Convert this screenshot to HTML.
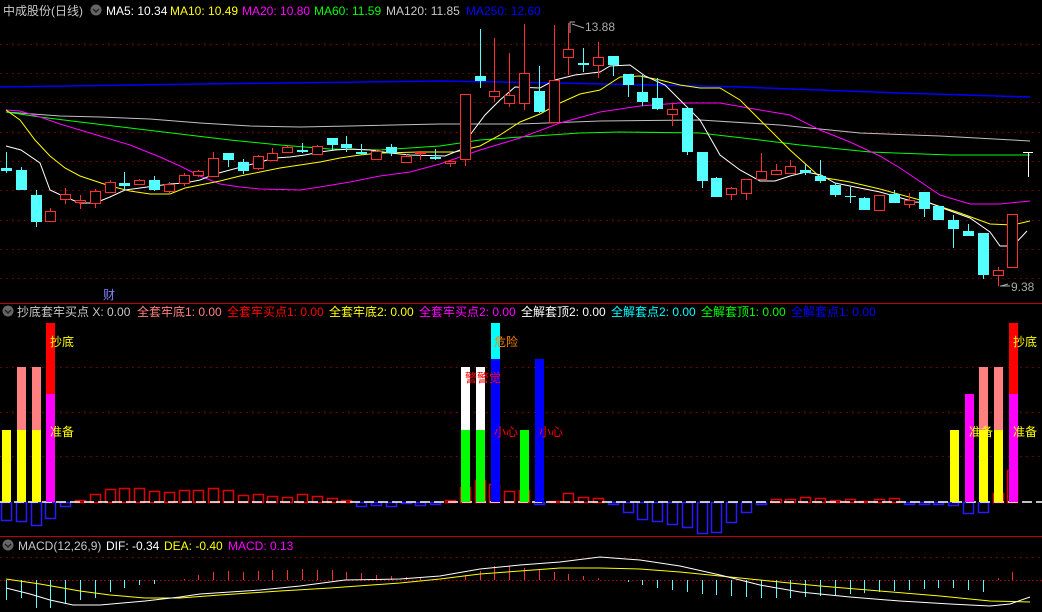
<!DOCTYPE html>
<html><head><meta charset="utf-8"><style>
html,body{margin:0;padding:0;background:#000;width:1042px;height:612px;overflow:hidden}
svg{display:block}
text{font-family:"Liberation Sans","Noto Sans CJK SC",sans-serif;font-size:12px}
</style></head><body>
<svg id="s" width="1042" height="612" xmlns="http://www.w3.org/2000/svg">
<rect width="1042" height="612" fill="#000"/>
<g id="grid"></g>
<g id="lines"></g>
<g id="candles"></g>
<g id="p2"></g>
<g id="p3"></g>
<line x1="0" y1="303.5" x2="1042" y2="303.5" stroke="#c00000"/>
<line x1="0" y1="536.5" x2="1042" y2="536.5" stroke="#c00000"/>
<circle cx="96" cy="10" r="5.5" fill="#666"/><path d="M93 9 L96 12 L99 9" stroke="#222" stroke-width="1.5" fill="none"/>
<text x="3" y="15" fill="#c8c8c8">中成股份(日线)</text>
<text x="106" y="15" fill="#fff">MA5: 10.34</text>
<text x="170" y="15" fill="#ffff00">MA10: 10.49</text>
<text x="242" y="15" fill="#ff00ff">MA20: 10.80</text>
<text x="314" y="15" fill="#00ff00">MA60: 11.59</text>
<text x="386" y="15" fill="#c8c8c8">MA120: 11.85</text>
<text x="466" y="15" fill="#0000ff">MA250: 12.60</text>
<circle cx="8" cy="311" r="5.5" fill="#666"/><path d="M5 310 L8 313 L11 310" stroke="#222" stroke-width="1.5" fill="none"/>
<text x="17" y="316" fill="#c8c8c8">抄底套牢买点 X: 0.00</text>
<text x="137" y="316" fill="#ff8080">全套牢底1: 0.00</text>
<text x="227" y="316" fill="#ff0000">全套牢买点1: 0.00</text>
<text x="329" y="316" fill="#ffff00">全套牢底2: 0.00</text>
<text x="419" y="316" fill="#ff00ff">全套牢买点2: 0.00</text>
<text x="521" y="316" fill="#fff">全解套顶2: 0.00</text>
<text x="611" y="316" fill="#00ffff">全解套点2: 0.00</text>
<text x="701" y="316" fill="#00ff00">全解套顶1: 0.00</text>
<text x="791" y="316" fill="#0000ff">全解套点1: 0.00</text>
<circle cx="8" cy="545" r="5.5" fill="#666"/><path d="M5 544 L8 547 L11 544" stroke="#222" stroke-width="1.5" fill="none"/>
<text x="18" y="550" fill="#c8c8c8">MACD(12,26,9)</text>
<text x="106" y="550" fill="#fff">DIF: -0.34</text>
<text x="164" y="550" fill="#ffff00">DEA: -0.40</text>
<text x="228" y="550" fill="#ff00ff">MACD: 0.13</text>
<text x="103" y="299" fill="#8080ff">财</text>
<path d="M570 33 V22 H575 M572 24 L584 28" stroke="#aaa" fill="none"/>
<text x="585" y="31" fill="#aaa">13.88</text>
<path d="M1001 286 L1008 284 M1000 286 H1010" stroke="#aaa" fill="none"/>
<text x="1011" y="291" fill="#aaa">9.38</text>
<path d="M1023 152.5 H1033 M1028.5 152 V177" stroke="#fff"/>
</svg>
<script>
var NS="http://www.w3.org/2000/svg";
function el(p,t,a){var e=document.createElementNS(NS,t);for(var k in a)e.setAttribute(k,a[k]);document.getElementById(p).appendChild(e);return e;}
function tx(x,y,s,c){var e=el('p2','text',{x:x,y:y,fill:c,'font-size':13});e.textContent=s;}
// grids
[44,73,102,132,161,190,220,249,278,367,412,456,557].forEach(function(y){el('grid','line',{x1:0,x2:1042,y1:y+.5,y2:y+.5,stroke:'#8a0000','stroke-dasharray':'1.5 4.5'});});
el('grid','line',{x1:0,x2:1042,y1:580.5,y2:580.5,stroke:'#c00000','stroke-dasharray':'1.5 2.5'});
// candles: [type c/r, top, bottom, wickTop, wickBot, filled]
var C=[['c',168,171,152,173],['c',170,190,167,190],['c',195,222,190,227],['r',211,221,208,221],['r',194,199,188,204],['r',200,202,195,209],['r',191,203,189,208],['r',182,192,180,193],['c',183,186,172,190],['r',180,184,179,185],['c',180,190,176,191],['r',184,191,182,193],['r',175,183,173,186],['r',171,175,170,177],['r',158,176,152,176],['c',153,160,153,167],['c',162,171,159,174],['r',156,168,155,170],['r',153,160,148,161],['r',147,152,146,153],['c',150,152,143,153],['r',146,154,145,155],['c',138,145,138,150],['c',144,148,136,152],['c',152,154,144,155],['r',151,159,150,160],['c',147,153,144,156],['r',156,162,154,163],['r',152,154,151,160,1],['c',157,159,149,160],['r',161,163,160,167],['r',94,159,94,166],['c',76,81,29,88],['r',91,96,38,102],['r',95,103,53,107],['r',73,103,24,110],['c',91,112,66,113],['r',80,122,25,122],['r',49,57,23,75],['c',63,65,48,72],['r',57,65,42,78],['c',56,65,56,76],['c',74,85,74,97],['c',92,102,75,106],['c',98,109,78,110],['r',109,114,104,126],['c',108,152,108,155],['c',152,181,152,188],['c',178,197,177,197],['r',188,194,187,200],['r',179,193,179,200],['r',171,179,153,180],['r',170,174,164,174],['r',166,173,160,173],['c',170,173,164,175],['c',176,181,160,183],['c',185,195,183,197],['c',196,196,187,203],['c',198,210,197,210],['r',195,210,195,210],['c',194,203,190,203],['r',200,204,193,208],['c',192,209,192,217],['c',206,220,206,220],['c',220,229,215,248],['c',231,236,224,236],['c',233,275,233,279],['r',270,275,267,286],['r',214,267,214,267]];
C.forEach(function(d,i){var x=Math.round(6+i*14.8);var col=d[0]=='c'?'#54ffff':'#ff3030';
 el('candles','line',{x1:x+.5,x2:x+.5,y1:d[3],y2:d[4],stroke:col});
 var h=Math.max(1,d[2]-d[1]);
 if(d[0]=='c'||d[5]) el('candles','rect',{x:x-5,y:d[1],width:11,height:h,fill:col});
 else el('candles','rect',{x:x-4.5,y:d[1]+.5,width:10,height:h,fill:'#000',stroke:col});
});
function pl(g,pts,c,w){el(g,'polyline',{points:pts.map(function(p){return p.join(',')}).join(' '),fill:'none',stroke:c,'stroke-width':w||1});}
pl('lines',[[0,87],[200,84],[440,81],[560,83],[740,87],[900,93],[1030,97]],'#0000ff',1.5);
pl('lines',[[6,112],[60,116],[100,117],[150,119],[200,123],[250,126],[300,127],[350,126],[440,124],[520,124],[600,121],[700,120],[780,125],[860,133],[940,136],[1030,141]],'#c0c0c0');
pl('lines',[[6,112],[40,117],[80,122],[130,128],[180,134],[230,140],[280,145],[330,149],[380,150],[440,146],[480,140],[520,137],[580,133],[620,132],[700,133],[760,140],[800,145],[870,152],[950,155],[1030,155]],'#00ff00');
pl('lines',[[6,110],[20,111],[40,117],[60,124],[80,130],[100,136],[130,145],[160,157],[180,166],[200,176],[220,184],[240,187],[260,189],[300,190],[320,187],[350,182],[380,176],[410,172],[440,164],[480,150],[520,138],[560,123],[600,112],[640,106],[680,103],[720,103],[760,110],[790,115],[820,130],[850,142],[880,156],[900,168],[940,195],[970,204],[1000,204],[1030,201]],'#ff00ff');
pl('lines',[[6,110],[20,120],[35,140],[50,156],[65,168],[80,176],[95,181],[110,186],[130,191],[150,194],[170,194],[185,188],[200,185],[220,181],[240,176],[260,172],[280,168],[300,165],[320,162],[340,158],[360,155],[380,153],[420,152],[455,152],[480,146],[500,135],[520,122],[540,114],[560,103],[580,94],[600,90],[620,77],[640,76],[660,80],[680,85],[700,88],[720,88],[740,100],[760,120],[790,150],[820,177],[850,182],[880,189],[920,200],[960,213],[990,224],[1013,225],[1030,221]],'#ffff00');
pl('lines',[[6,146],[21,150],[40,163],[50,190],[65,197],[80,203],[95,203],[110,197],[125,190],[140,188],[155,186],[170,184],[185,183],[200,180],[215,174],[230,170],[245,166],[260,162],[275,158],[290,157],[305,155],[320,152],[335,150],[350,149],[370,150],[390,153],[410,155],[445,156],[460,150],[470,135],[485,115],[500,100],[515,87],[540,88],[555,80],[575,75],[600,72],[610,66],[630,65],[645,76],[665,85],[680,100],[700,120],[720,155],[740,170],[760,181],[775,181],[790,176],[806,172],[821,175],[835,183],[850,186],[880,192],[915,202],[930,203],[945,209],[970,218],[990,232],[1000,246],[1013,246],[1027,231]],'#ffffff');
// panel 2 histogram (outline bars), values: top y if <502 red, bottom if >502 blue
var H=[520,521,525,518,506,500,494,489,488,488,491,492,490,490,488,490,495,494,496,497,494,496,498,500,506,505,506,503,505,504,500,487,480,484,491,490,504,501,493,497,498,504,512,519,521,524,527,533,532,522,512,504,499,499,497,498,500,499,501,499,498,504,504,504,505,513,512,493,470];
H.forEach(function(v,i){var x=Math.round(6+i*14.8);
 if(v>502) el('p2','rect',{x:x-4.5,y:502.5,width:10,height:v-502,fill:'none',stroke:'#2a1aff','stroke-width':1.5});
 else if(v<502) el('p2','rect',{x:x-4.5,y:v+.5,width:10,height:502-v,fill:'none',stroke:'#e00000','stroke-width':1.5});
});
el('p2','line',{x1:0,x2:1042,y1:502,y2:502,stroke:'#fff','stroke-width':1.5,'stroke-dasharray':'10 4'});
function bar(x,segs){segs.forEach(function(s){el('p2','rect',{x:x,y:s[0],width:9,height:s[1]-s[0],fill:s[2]});});}
bar(2,[[430,502,'#ffff00']]);
bar(17,[[367,430,'#ff8080'],[430,502,'#ffff00']]);
bar(32,[[367,430,'#ff8080'],[430,502,'#ffff00']]);
bar(46,[[323,394,'#ff0000'],[394,502,'#ff00ff']]);
bar(461,[[367,430,'#ffffff'],[430,502,'#00ff00']]);
bar(476,[[367,430,'#ffffff'],[430,502,'#00ff00']]);
bar(491,[[323,359,'#00ffff'],[359,502,'#0000ff']]);
bar(520,[[430,502,'#00ff00']]);
bar(535,[[359,502,'#0000ff']]);
bar(950,[[430,502,'#ffff00']]);
bar(965,[[394,502,'#ff00ff']]);
bar(979,[[367,430,'#ff8080'],[430,502,'#ffff00']]);
bar(994,[[367,430,'#ff8080'],[430,502,'#ffff00']]);
bar(1009,[[323,394,'#ff0000'],[394,502,'#ff00ff']]);
tx(50,346,'抄底','#ffff00');tx(50,436,'准备','#ffff00');
tx(494,346,'危险','#ff8000');tx(465,382,'警警觉','#ff0000');
tx(494,436,'小心','#ff0000');tx(539,436,'小心','#ff0000');
tx(969,436,'准备','#ffff00');tx(1013,436,'准备','#ffff00');tx(1013,346,'抄底','#ffff00');
// MACD
var M=[600,598,608,608,604,600,598,592,588,585,584,580,579,575,572,571,572,571,570,570,569,570,570,572,573,575,576,577,577,579,580,575,571,566,566,568,570,572,574,576,578,580,582,585,588,590,592,594,595,596,597,598,598,598,597,596,595,594,593,592,591,590,589,588,588,590,592,578,572];
M.forEach(function(v,i){var x=Math.round(6+i*14.8)+.5;el('p3','line',{x1:x,x2:x,y1:580,y2:v,stroke:v>580?'#54ffff':'#ff3030'});});
pl('p3',[[6,579],[40,584],[80,591],[110,595],[145,598],[180,598],[220,595],[280,591],[330,588],[400,583],[440,579],[480,574],[520,571],[560,568],[600,568],[640,569],[680,572],[720,576],[760,580],[820,586],[880,591],[940,596],[990,601],[1030,602]],'#ffff00');
pl('p3',[[6,588],[30,594],[50,600],[73,605],[100,605],[145,601],[180,597],[200,594],[260,590],[300,586],[330,582],[345,580],[400,579],[440,576],[480,569],[520,565],[560,562],[600,557],[640,560],[680,566],[720,575],[760,585],[800,592],[850,597],[900,601],[950,604],[990,606],[1010,604],[1030,597]],'#ffffff');
</script>
</body></html>
